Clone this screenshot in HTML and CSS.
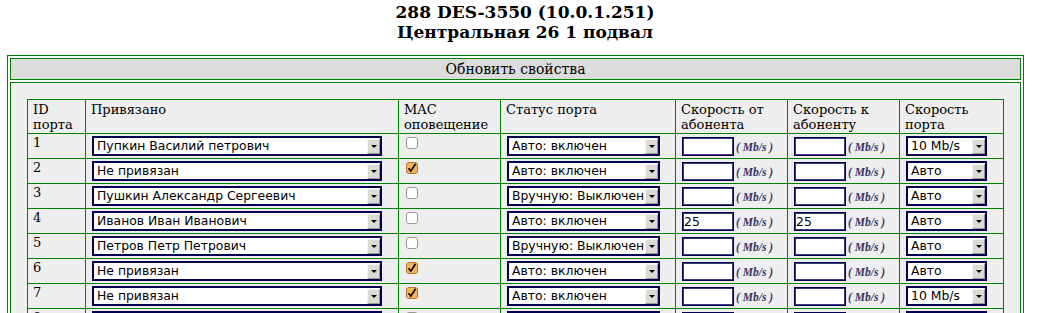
FILE: index.html
```html
<!DOCTYPE html>
<html>
 <head>
  <title>288 DES-3550</title>
  <meta charset="utf-8" />
	<link rel="stylesheet" href="styles.css">
 </head>
 <body>
	<div class="title">288 DES-3550 (10.0.1.251)<br>Центральная 26 1 подвал</div>
	<div class="frame">
		<div class="frame-head">Обновить свойства</div>
		<div class="frame-body">
			<table class="ports">
				<colgroup>
					<col class="c-id"><col class="c-name"><col class="c-mac"><col class="c-st"><col class="c-sp"><col class="c-sp"><col class="c-port">
				</colgroup>
				<thead>
					<tr>
						<th>ID<br>порта</th>
						<th>Привязано</th>
						<th>MAC<br>оповещение</th>
						<th>Статус порта</th>
						<th>Скорость от<br>абонента</th>
						<th>Скорость к<br>абоненту</th>
						<th>Скорость<br>порта</th>
					</tr>
				</thead>
				<tbody id="rows"></tbody>
			</table>
		</div>
	</div>
	<script type="text/javascript">
		var rows = [
			['1','Пупкин Василий петрович',0,'Авто: включен','','','10 Mb/s'],
			['2','Не привязан',1,'Авто: включен','','','Авто'],
			['3','Пушкин Александр Сергеевич',0,'Вручную: Выключен','','','Авто'],
			['4','Иванов Иван Иванович',0,'Авто: включен','25','25','Авто'],
			['5','Петров Петр Петрович',0,'Вручную: Выключен','','','Авто'],
			['6','Не привязан',1,'Авто: включен','','','Авто'],
			['7','Не привязан',1,'Авто: включен','','','10 Mb/s'],
			['8','Не привязан',0,'Авто: включен','','','Авто'],
			['9','Не привязан',0,'Авто: включен','','','Авто']
		];
		var tick = '<svg class="chk" width="12" height="12" viewBox="0 0 12 12">' +
			'<rect x="0.5" y="0.5" width="11" height="11" rx="2.5" fill="#f3b462" stroke="#b8772c"/>' +
			'<path d="M2.6 6.2 L4.8 9.2 L9.6 1.8" fill="none" stroke="#000" stroke-width="1.6"/></svg>';
		var box = '<svg class="chk" width="12" height="12" viewBox="0 0 12 12">' +
			'<rect x="0.5" y="0.5" width="11" height="11" rx="2.5" fill="#fff" stroke="#9a9690"/></svg>';
		function sel(cls, text){
			return '<span class="sel ' + cls + '"><select><option>' + text + '</option></select><span class="btn"></span></span>';
		}
		function speed(val){
			return '<div class="speed"><input type="text" value="' + val + '"><span class="unit">( Mb/s )</span></div>';
		}
		var html = '';
		for(var i=0;i<rows.length;i++){
			var r = rows[i];
			html += '<tr>' +
				'<td class="id">' + r[0] + '</td>' +
				'<td>' + sel('s-name', r[1]) + '</td>' +
				'<td>' + (r[2] ? tick : box) + '</td>' +
				'<td>' + sel('s-st', r[3]) + '</td>' +
				'<td>' + speed(r[4]) + '</td>' +
				'<td>' + speed(r[5]) + '</td>' +
				'<td>' + sel('s-port', r[6]) + '</td>' +
				'</tr>';
		}
		document.getElementById('rows').innerHTML = html;
	</script>
 </body>
</html>
```

FILE: styles.css
```css
body {margin: 0 13px 0 7px; background: #fff; font-family: "DejaVu Serif", serif; font-size: 13px; color: #000;}
.title {padding: 2px 0 0 19px; text-align: center; font-weight: bold; font-size: 17px; line-height: 20px;}

.frame {margin-top: 13px; border: 1px solid #008000; padding: 2px; display: flex; flex-direction: column; gap: 2px;}
.frame-head {border: 1px solid #008000; background: #dcdcdc; height: 20px; line-height: 20px; text-align: center; font-size: 14px;}
.frame-body {border: 1px solid #008000; background: #eeeeee; padding: 16px 16px 40px;}

.ports {border-collapse: collapse; table-layout: fixed; width: 976px;}
.ports col.c-id {width: 58px;}
.ports col.c-name {width: 313px;}
.ports col.c-mac {width: 102px;}
.ports col.c-st {width: 175px;}
.ports col.c-sp {width: 112px;}
.ports col.c-port {width: 104px;}
.ports th, .ports td {border: 1px solid #008000; padding: 2px 5px; vertical-align: top; text-align: left; font-weight: normal; line-height: 15px;}
.ports th {padding: 2px 5px 1px;}
.ports td.id {padding-top: 1px;}

.sel {position: relative; display: block; margin-left: 1px; height: 20px;}
.sel select {-webkit-appearance: none; appearance: none; display: block; box-sizing: border-box; width: 100%; height: 20px; margin: 0; padding: 0 0 0 3px; border: 2px solid #00004e; border-radius: 0; background: #fff; color: #000; font-family: "DejaVu Sans", sans-serif; font-size: 12.4px; line-height: 16px; outline: none;}
.sel .btn {position: absolute; top: 3px; right: 2px; width: 13px; height: 15px; box-sizing: border-box; background: #dcdad5; border: 1px solid; border-color: #f4f3f1 #9c9a94 #9c9a94 #f4f3f1;}
.sel .btn:after {content: ""; position: absolute; left: 3px; top: 5px; border-left: 3px solid transparent; border-right: 3px solid transparent; border-top: 3px solid #000;}
.s-name {width: 290px;}
.s-st {width: 153px;}
.s-port {width: 81px;}

.chk {display: block; margin: 1px 0 0 2px;}

.speed {display: flex; align-items: center; gap: 2px; margin-left: 1px; height: 20px;}
.speed input {box-sizing: border-box; width: 52px; height: 19px; margin: 0; padding: 0 1px; border: 1px solid #00004e; box-shadow: inset 0 0 0 1px #3a3a7a; background: #fff; font-family: "DejaVu Sans", sans-serif; font-size: 12.4px; color: #000; outline: none;}
.unit {padding-top: 2px; font-family: "Liberation Serif", serif; font-style: italic; font-weight: bold; font-size: 11.5px; color: #33336a;}
```
